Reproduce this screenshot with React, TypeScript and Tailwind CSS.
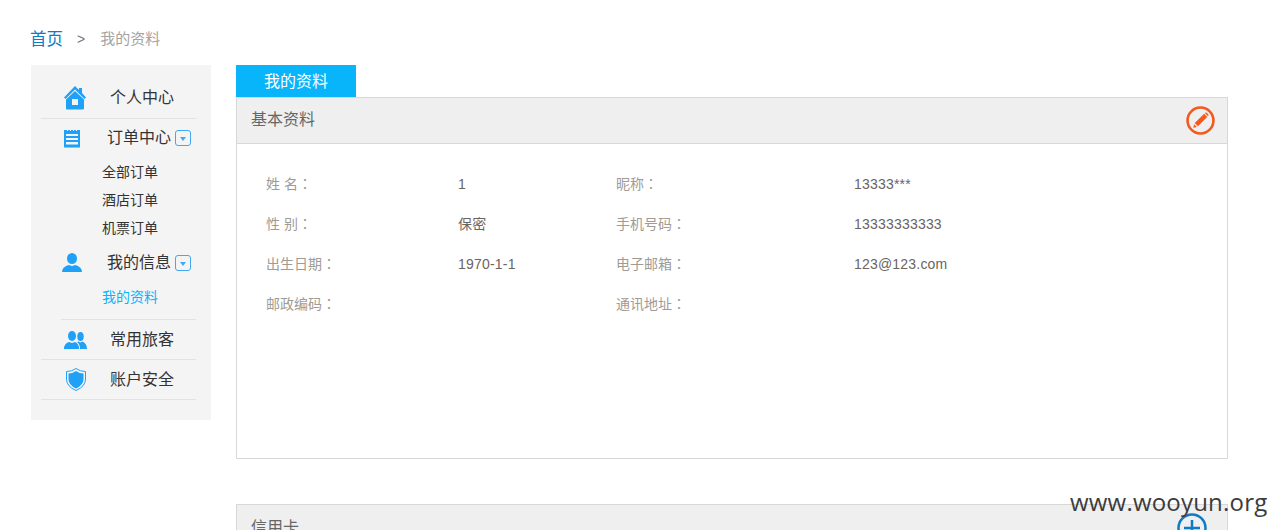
import React from 'react';

const FONT = 'font-["Liberation_Sans","Noto_Sans_CJK_SC",sans-serif]';

const HomeIcon = () => (
  <svg width="22" height="24" viewBox="0 0 22 24" fill="#1ea1f7">
    <path d="M11 0 L15 4 V2 H18 V7 L22 11.5 L20.5 13 L11 3.5 L1.500 13 L0 11.5 Z" />
    <path fillRule="evenodd" d="M2 13.500 L11 5 L20 13.500 V22.500 Q20 23.500 19 23.500 H3 Q2 23.500 2 22.500 Z M8 13 V19 H14 V13 Z" />
  </svg>
);

const NotepadIcon = () => (
  <svg width="18" height="20" viewBox="0 0 18 20" fill="#1ea1f7">
    <path fillRule="evenodd" d="M1 2 H17 V19.500 H1 Z M3 6 V8 H15 V6 Z M3 10 V12 H15 V10 Z M3 14 V16.500 H15 V14 Z" />
    <path d="M4 0 H5 V3 H4 Z M7 0 H8 V3 H7 Z M10 0 H11 V3 H10 Z M13 0 H14 V3 H13 Z" fill="#f4f4f4" />
  </svg>
);

const UserIcon = () => (
  <svg width="20" height="19" viewBox="0 0 20 19" fill="#1ea1f7">
    <ellipse cx="10" cy="5.500" rx="5" ry="5.500" />
    <path d="M0 19 Q0 14 6.500 12 L10 13 L13.500 12 Q20 14 20 19 Z" />
  </svg>
);

const PeopleIcon = () => (
  <svg width="23" height="18" viewBox="0 0 23 18" fill="#1ea1f7">
    <ellipse cx="8" cy="5" rx="4" ry="5" />
    <path d="M0 18 Q0 12.500 5 11 L8 12 L11 11 Q15 12.500 15 18 Z" />
    <ellipse cx="16.500" cy="5.500" rx="3.200" ry="4.500" />
    <path d="M16 18 Q16 13 13 11 L14.500 10.500 L16.500 11.500 L18.500 10.500 Q23 12.500 23 18 Z" />
  </svg>
);

const ShieldIcon = () => (
  <svg width="20" height="23" viewBox="0 0 20 23" className="ml-[2px]">
    <path d="M10 .5 Q14 3.500 19.500 3.500 V11 Q19.500 18.500 10 22.500 Q.5 18.500 .5 11 V3.500 Q6 3.500 10 .5 Z" fill="none" stroke="#1ea1f7" />
    <path d="M10 3 Q13.500 5.500 17.500 5.500 V11 Q17.500 17 10 20.500 Q2.500 17 2.500 11 V5.500 Q6.500 5.500 10 3 Z" fill="#1ea1f7" />
  </svg>
);

const ToggleIcon = () => (
  <span className="flex h-[16px] w-[16px] items-center justify-center rounded-[3px] border border-[#3fa9f5]">
    <span className="mt-[2px] h-0 w-0 border-x-[3.5px] border-t-[4px] border-x-transparent border-t-[#3fa9f5]" />
  </span>
);

const EditIcon = () => (
  <svg width="29" height="29" viewBox="0 0 28 28" className="block">
    <circle cx="14" cy="14" r="12.500" fill="none" stroke="#f4581c" strokeWidth="2.500" />
    <path d="M17.500 7.500 L20.500 10.500 L11.500 19.500 L8.500 16.500 Z M7.800 17.500 L10.500 20.200 L7 21 Z M18.500 6.500 Q19.500 6 20 6.500 L21.500 8 Q22 8.500 21.500 9.500 L21.200 9.800 L18.200 6.800 Z" fill="#f4581c" />
  </svg>
);

const PlusIcon = () => (
  <svg width="30" height="30" viewBox="0 0 30 30" className="block">
    <circle cx="15" cy="15" r="13.500" fill="none" stroke="#0f7ac6" strokeWidth="2.500" />
    <path d="M15 7 V23 M7 15 H23" stroke="#0f7ac6" strokeWidth="2.500" />
  </svg>
);

const NavRow = ({ icon, label, className }: { icon: React.ReactNode; label: string; className?: string }) => (
  <div className={`flex items-center ${className ?? ''}`}>
    <div className="flex w-[68px] justify-center">{icon}</div>
    <span className="ml-[1px] text-[16px] text-[#333]">{label}</span>
  </div>
);

const ToggleRow = ({ icon, label, className }: { icon: React.ReactNode; label: string; className?: string }) => (
  <div className={`flex items-center ${className ?? ''}`}>
    <div className="flex w-[62px] justify-center">{icon}</div>
    <span className="ml-[4px] text-[16px] text-[#333]">{label}</span>
    <span className="ml-[4px]"><ToggleIcon /></span>
  </div>
);

const SubItem = ({ label, active }: { label: string; active?: boolean }) => (
  <div className={`h-[28px] pl-[61px] text-[14px] leading-[28px] ${active ? 'text-[#08b5fb]' : 'text-[#333]'}`}>{label}</div>
);

const Label = ({ text, className }: { text: string; className: string }) => (
  <span className={`text-[#a09b95] ${className}`}>
    {text}
    <span className='font-["Noto_Sans_CJK_TC",sans-serif]'>：</span>
  </span>
);

const rows = [
  ['姓 名', '1', '昵称', '13333***'],
  ['性 别', '保密', '手机号码', '13333333333'],
  ['出生日期', '1970-1-1', '电子邮箱', '123@123.com'],
  ['邮政编码', '', '通讯地址', ''],
];

export default function App() {
  return (
    <div className={`relative h-[530px] overflow-hidden bg-white ${FONT}`}>
      {/* Breadcrumb */}
      <div className="flex h-[65px] items-start pl-[30px] pt-[29px]">
        <span className="text-[16.5px] leading-[20px] text-[#0f7ac6]">首页</span>
        <span className="ml-[14px] text-[14px] leading-[20px] text-[#777]">&gt;</span>
        <span className="ml-[15px] text-[15px] leading-[20px] text-[#a3a3a3]">我的资料</span>
      </div>

      <div className="flex items-start pl-[31px]">
        {/* Sidebar */}
        <aside className="h-[355px] w-[180px] bg-[#f4f4f4] pl-[10px] pr-[15px] pt-[12px]">
          <NavRow icon={<HomeIcon />} label="个人中心" className="h-[42px] border-b border-[#e2e2e2]" />
          <ToggleRow icon={<NotepadIcon />} label="订单中心" className="h-[39px] pb-[1px]" />
          <div>
            <SubItem label="全部订单" />
            <SubItem label="酒店订单" />
            <SubItem label="机票订单" />
          </div>
          <ToggleRow icon={<UserIcon />} label="我的信息" className="h-[40px] pt-[1px]" />
          <div className="ml-[20px] h-[38px] border-b border-[#e2e2e2] pt-[1px] [&>div]:pl-[41px]">
            <SubItem label="我的资料" active />
          </div>
          <NavRow icon={<PeopleIcon />} label="常用旅客" className="h-[40px] border-b border-[#e2e2e2]" />
          <NavRow icon={<ShieldIcon />} label="账户安全" className="h-[40px] border-b border-[#e2e2e2]" />
        </aside>

        {/* Main */}
        <main className="ml-[25px] w-[992px]">
          <div className="h-[32px] w-[120px] bg-[#08b5fb] text-center text-[16px] leading-[33px] text-white">我的资料</div>
          <section className="h-[362px] border border-[#d8d8d8]">
            <div className="flex h-[46px] items-center justify-between border-b border-[#d8d8d8] bg-[#efefef] pl-[14px] pr-[12px]">
              <span className="-mt-[2px] text-[16px] text-[#666]">基本资料</span>
              <EditIcon />
            </div>
            <div className="pl-[29px] pt-[20px] text-[14px]">
              {rows.map((r) => (
                <div key={r[0]} className="flex h-[40px] items-center">
                  <Label text={r[0]} className="w-[192px]" />
                  <span className="w-[158px] tracking-[0.2px] text-[#6b6560]">{r[1]}</span>
                  <Label text={r[2]} className="w-[238px]" />
                  <span className="tracking-[0.2px] text-[#6b6560]">{r[3]}</span>
                </div>
              ))}
            </div>
          </section>
          <section className="mt-[45px] border border-[#d8d8d8]">
            <div className="flex h-[46px] items-center justify-between bg-[#efefef] pl-[14px] pr-[20px]">
              <span className="text-[16px] text-[#666]">信用卡</span>
              <PlusIcon />
            </div>
          </section>
        </main>
      </div>

      {/* Watermark */}
      <div className='absolute left-[1070px] top-[485px] font-["Open_Sans",sans-serif] text-[24px] leading-[34px] tracking-[0.2px] whitespace-nowrap text-[#3c3c3c]'>www.wooyun.org</div>
    </div>
  );
}
